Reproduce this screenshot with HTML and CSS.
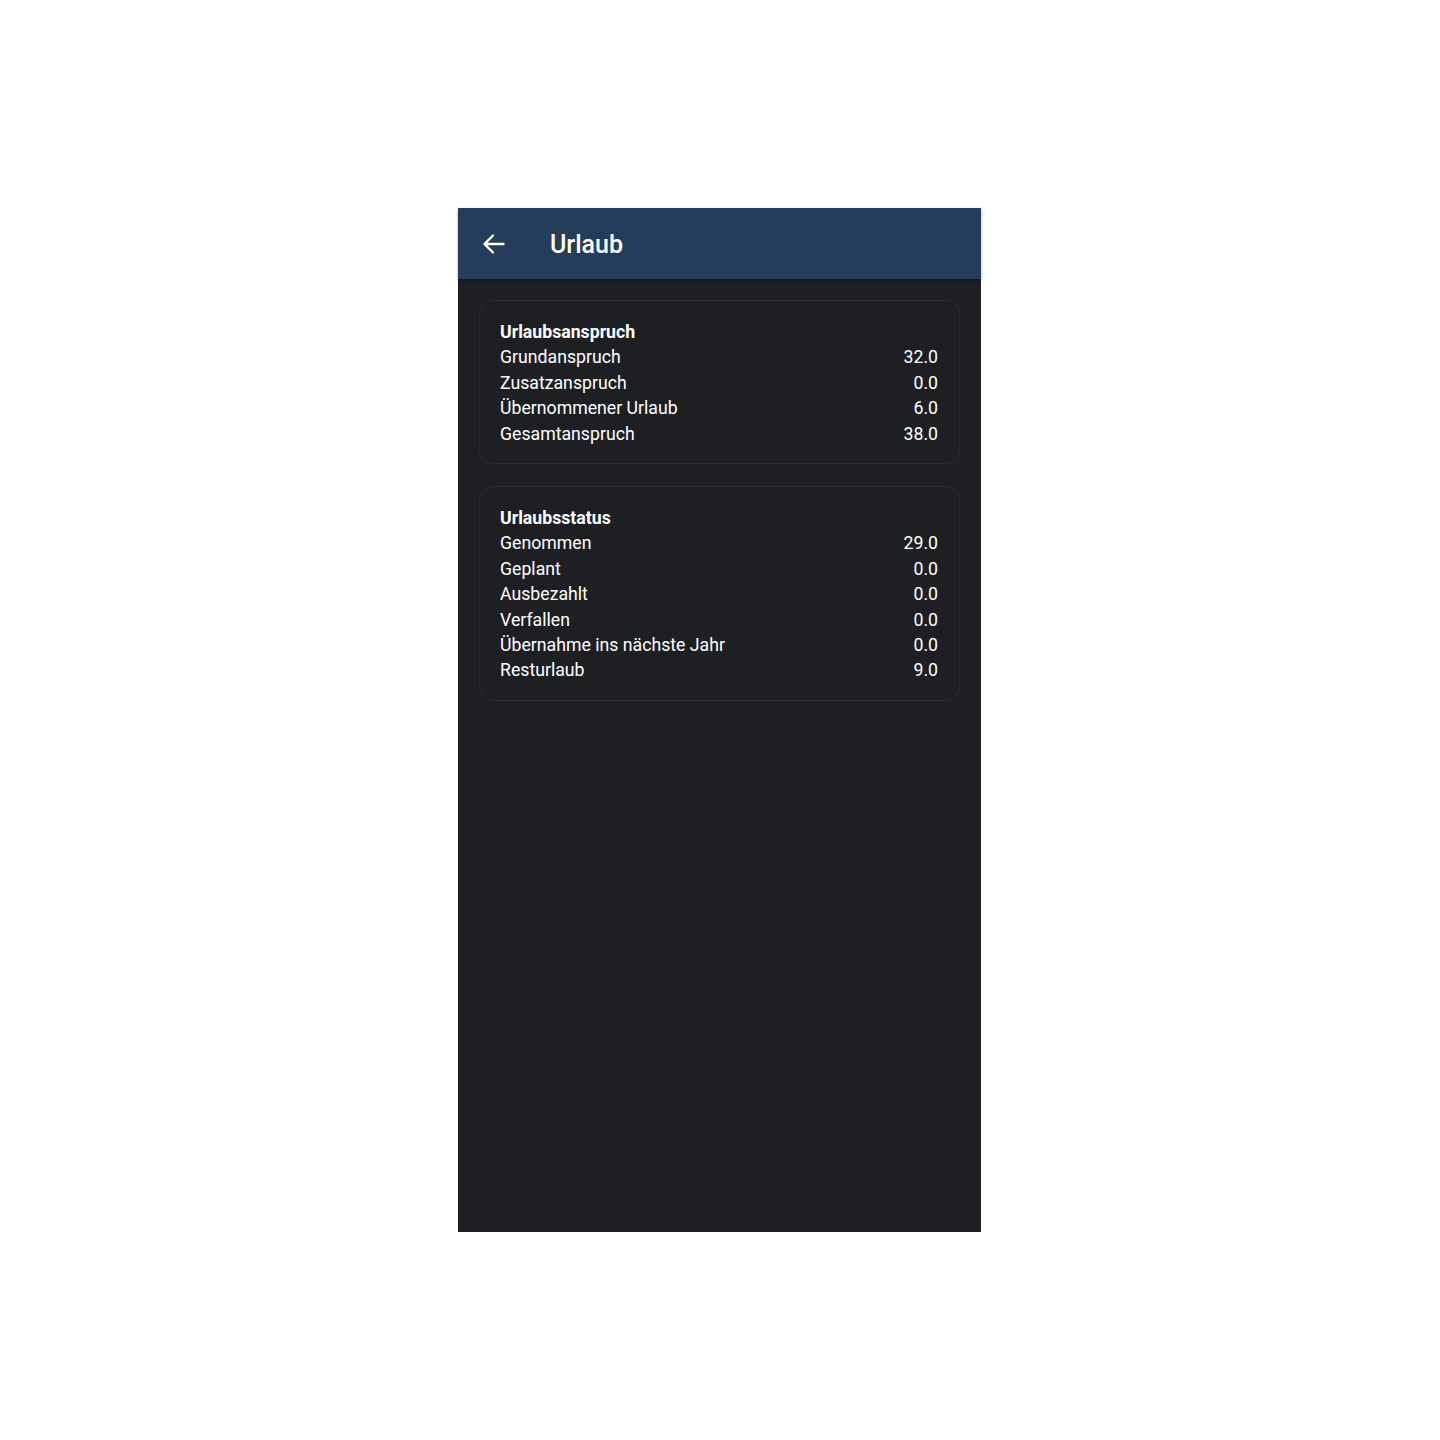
FILE: index.html
```html
<!DOCTYPE html>
<html lang="de">
<head>
    <meta charset="UTF-8">
    <meta name="viewport" content="width=device-width, initial-scale=1.0">
    <title>Urlaub</title>
    <link rel="stylesheet" href="styles.css">
</head>
<body>
    <div class="screen">
        <!-- App Bar -->
        <div class="app-bar">
            <button class="back-btn" aria-label="Zurück">
                <svg width="24" height="24" viewBox="0 0 24 24" fill="none" stroke="#fff" stroke-width="2.4" stroke-linecap="round" stroke-linejoin="round">
                    <path d="M21.5 12H2.5M11 3.5L2.5 12l8.5 8.5"/>
                </svg>
            </button>
            <h1>Urlaub</h1>
        </div>

        <div class="content">
            <!-- Urlaubsanspruch -->
            <div class="card">
                <div class="card-title">Urlaubsanspruch</div>
                <div class="row"><span>Grundanspruch</span><span>32.0</span></div>
                <div class="row"><span>Zusatzanspruch</span><span>0.0</span></div>
                <div class="row"><span>Übernommener Urlaub</span><span>6.0</span></div>
                <div class="row"><span>Gesamtanspruch</span><span>38.0</span></div>
            </div>

            <!-- Urlaubsstatus -->
            <div class="card">
                <div class="card-title">Urlaubsstatus</div>
                <div class="row"><span>Genommen</span><span>29.0</span></div>
                <div class="row"><span>Geplant</span><span>0.0</span></div>
                <div class="row"><span>Ausbezahlt</span><span>0.0</span></div>
                <div class="row"><span>Verfallen</span><span>0.0</span></div>
                <div class="row"><span>Übernahme ins nächste Jahr</span><span>0.0</span></div>
                <div class="row"><span>Resturlaub</span><span>9.0</span></div>
            </div>
        </div>
    </div>
</body>
</html>
```

FILE: styles.css
```css
/* General Styles */
body {
    margin: 0;
    font-family: Roboto, 'Liberation Sans', sans-serif;
    background: #fff;
    display: flex;
    justify-content: center;
    align-items: center;
    height: 100vh;
}

/* Phone Screen */
.screen {
    width: 523px;
    height: 1024px;
    margin-right: 1px;
    background: #1e1f22;
    color: #fff;
    display: flex;
    flex-direction: column;
}

/* App Bar */
.app-bar {
    height: 71px;
    background: #233d5a;
    display: flex;
    align-items: center;
    padding: 0 16px 0 24px;
    box-shadow: 0 1px 3px rgba(0, 0, 0, 0.3);
}

.back-btn {
    background: none;
    border: none;
    padding: 0;
    width: 24px;
    height: 24px;
    cursor: pointer;
    display: flex;
}

.app-bar h1 {
    margin: 2px 0 0 44px;
    font-size: 25px;
    font-weight: 500;
}

/* Content */
.content {
    padding: 21px 21px;
    display: flex;
    flex-direction: column;
    gap: 22px;
}

.card {
    border: 1px solid #2a2b2f;
    border-radius: 14px;
    padding: 19px 21px 16px 20px;
    background: #1e1f22;
}

.card-title {
    font-weight: 700;
    font-size: 17.7px;
    line-height: 25.4px;
}

.row {
    display: flex;
    justify-content: space-between;
    font-size: 17.7px;
    line-height: 25.4px;
}
```
